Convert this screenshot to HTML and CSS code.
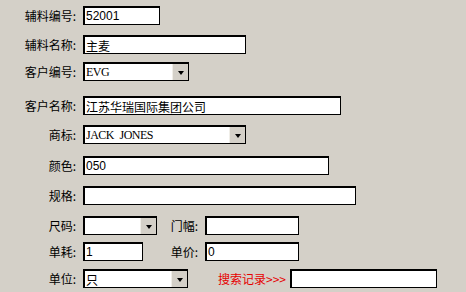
FILE: index.html
```html
<!DOCTYPE html>
<html lang="zh">
<head>
<meta charset="utf-8">
<link rel="stylesheet" href="styles.css">
</head>
<body>
<div class="form">
  <div class="row">
    <span class="label">辅料编号:</span>
    <div class="box w77"><span class="val num">52001</span></div>
  </div>
  <div class="row">
    <span class="label">辅料名称:</span>
    <div class="box w163"><span class="val">主麦</span></div>
  </div>
  <div class="row">
    <span class="label">客户编号:</span>
    <div class="box select w106"><span class="val mono">EVG</span><span class="btn"></span></div>
  </div>
  <div class="row">
    <span class="label">客户名称:</span>
    <div class="box w258"><span class="val">江苏华瑞国际集团公司</span></div>
  </div>
  <div class="row">
    <span class="label">商标:</span>
    <div class="box select w163"><span class="val mono">JACK JONES</span><span class="btn"></span></div>
  </div>
  <div class="row">
    <span class="label">颜色:</span>
    <div class="box w246"><span class="val num">050</span></div>
  </div>
  <div class="row">
    <span class="label">规格:</span>
    <div class="box w273"></div>
  </div>
  <div class="row">
    <span class="label">尺码:</span>
    <div class="cell">
      <div class="box select w74"><span class="val"></span><span class="btn"></span></div>
    </div>
    <span class="label2">门幅:</span>
    <div class="box w94"></div>
  </div>
  <div class="row">
    <span class="label">单耗:</span>
    <div class="cell">
      <div class="box w60"><span class="val num">1</span></div>
    </div>
    <span class="label2">单价:</span>
    <div class="box w94"><span class="val num">0</span></div>
  </div>
  <div class="row">
    <span class="label">单位:</span>
    <div class="box select w105"><span class="val">只</span><span class="btn"></span></div>
    <span class="search">搜索记录&gt;&gt;&gt;</span>
    <div class="box w147"></div>
  </div>
</div>
</body>
</html>
```

FILE: styles.css
```css
html, body {
  margin: 0;
  padding: 0;
  background: #d4d0c8;
}
body {
  width: 466px;
  height: 292px;
  overflow: hidden;
  font-family: "Noto Sans CJK SC", "Liberation Sans", sans-serif;
  font-size: 12px;
  color: #000;
}
.form {
  display: grid;
  grid-template-rows: 29px 27px 34px 29px 31px 30px 30px 26px 27px 19px;
  padding-top: 6px;
}
.row {
  display: flex;
  align-items: center;
  height: 19px;
}
.label {
  width: 76px;
  text-align: right;
  margin-right: 7px;
  line-height: 19px;
  white-space: nowrap;
}
.label2 {
  width: 38px;
  text-align: right;
  margin-right: 7px;
  line-height: 19px;
  white-space: nowrap;
}
.cell {
  width: 77px;
  display: flex;
}
.box {
  box-sizing: border-box;
  height: 19px;
  background: #fff;
  border: 2px solid #000;
  border-right-width: 1.5px;
  border-bottom-width: 1.5px;
  display: flex;
  align-items: center;
  overflow: hidden;
}
.val {
  flex: 1;
  padding-left: 1px;
  line-height: 15px;
  white-space: nowrap;
}
.num {
  font-family: "Liberation Sans", sans-serif;
  font-size: 12px;
}
.mono {
  font-family: "Liberation Serif", serif;
  font-size: 12px;
  letter-spacing: -0.5px;
  word-spacing: 3px;
}
.select .btn {
  width: 16px;
  height: 100%;
  background: #d4d0c8;
  border-left: 1px solid #f0eee8;
  box-sizing: border-box;
  display: flex;
  align-items: center;
  justify-content: center;
}
.select .btn::after {
  content: "";
  width: 0;
  height: 0;
  border-left: 3.5px solid transparent;
  border-right: 3.5px solid transparent;
  border-top: 4px solid #000;
  margin-top: 1px;
}
.search {
  color: #e60000;
  margin-left: 30px;
  margin-right: 4px;
  white-space: nowrap;
  line-height: 19px;
}
.w60 { width: 60px; }
.w74 { width: 74px; }
.w77 { width: 77px; }
.w94 { width: 94px; }
.w105 { width: 105px; }
.w106 { width: 106px; }
.w147 { width: 147px; }
.w163 { width: 163px; }
.w246 { width: 246px; }
.w258 { width: 258px; }
.w273 { width: 273px; }
```
